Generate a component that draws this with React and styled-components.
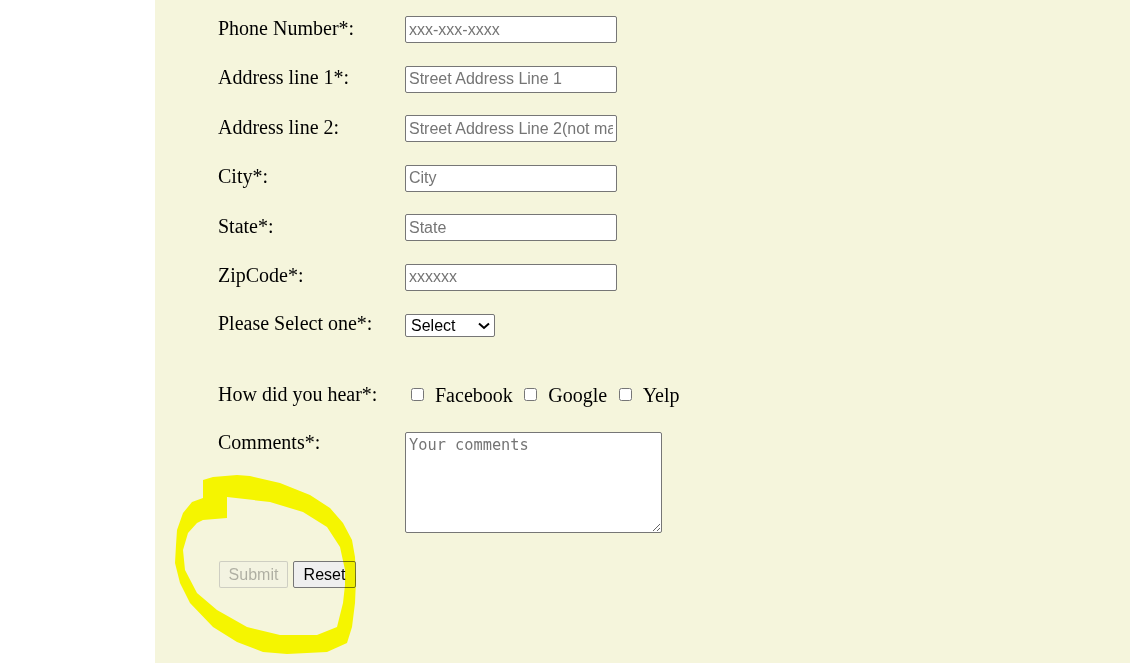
import React from 'react';
import styled, { createGlobalStyle } from 'styled-components';

const GlobalStyle = createGlobalStyle`
  body {
    margin: 0;
    font-family: "Liberation Serif", "Times New Roman", serif;
    font-size: 20px;
    color: #000000;
    background-color: #ffffff;
  }
`;

const fields = [
  { label: 'Phone Number*:', placeholder: 'xxx-xxx-xxxx' },
  { label: 'Address line 1*:', placeholder: 'Street Address Line 1' },
  { label: 'Address line 2:', placeholder: 'Street Address Line 2(not mandatory)' },
  { label: 'City*:', placeholder: 'City' },
  { label: 'State*:', placeholder: 'State' },
  { label: 'ZipCode*:', placeholder: 'xxxxxx' },
];

const sources = ['Facebook', 'Google', 'Yelp'];

const App = () => {
  return (
    <Page>
      <GlobalStyle />
      <Gutter />
      <Main>
        <Form onSubmit={(e) => e.preventDefault()}>
          {fields.map((field, i) => (
            <Row key={field.label} $gap={i === 0 ? 0 : 22.6} $height={27}>
              <Label>{field.label}</Label>
              <TextInput type="text" placeholder={field.placeholder} />
            </Row>
          ))}
          <Row $gap={22.6} $height={23}>
            <Label>Please Select one*:</Label>
            <SelectWrap>
              <Select defaultValue="">
                <option value="">Select</option>
                <option value="home">Home</option>
                <option value="office">Office</option>
              </Select>
              <Chevron width="12" height="8" viewBox="0 0 12 8">
                <polyline
                  points="1,1.5 6,6 11,1.5"
                  fill="none"
                  stroke="#000000"
                  strokeWidth="2"
                />
              </Chevron>
            </SelectWrap>
          </Row>
          <Row $gap={44.5} $height={27}>
            <Label $lift={0}>How did you hear*:</Label>
            <Options>
              {sources.map((src) => (
                <Option key={src}>
                  <Checkbox type="checkbox" />
                  <OptionText>{src}</OptionText>
                </Option>
              ))}
            </Options>
          </Row>
          <Row $gap={23.5} $align="flex-start">
            <Label $top={-1} $lift={0}>
              Comments*:
            </Label>
            <Comments placeholder="Your comments" />
          </Row>
          <Buttons>
            <Button type="submit" disabled $width={69}>
              Submit
            </Button>
            <Button type="reset" $width={63}>
              Reset
            </Button>
          </Buttons>
        </Form>
      </Main>
      <Scribble width="1130" height="663" viewBox="0 0 1130 663">
        <path
          fillRule="evenodd"
          fill="#ffff00"
          d="M203,480 L213,477 L237,475 L250,476 L280,483 L310,495 L330,508 L343,523 L352,540 L355,557 L356,580 L355,603 L352,627 L347,643 L327,652 L287,654 L263,652 L237,642 L213,627 L190,603 L180,583 L175,563 L176,545 L177,530 L183,513 L192,502 L203,498 Z
             M227,497 L227,518 L203,520 L197,523 L188,533 L183,550 L185,570 L197,593 L217,610 L247,627 L280,635 L317,635 L337,627 L343,603 L345,585 L345,570 L340,547 L327,527 L303,512 L270,502 Z"
        />
      </Scribble>
    </Page>
  );
};

export default App;

const Page = styled.div`
  position: relative;
  display: flex;
  min-height: 100vh;
`;

const Gutter = styled.div`
  width: 155px;
  flex-shrink: 0;
  background-color: #ffffff;
`;

const Main = styled.main`
  flex: 1;
  background-color: #f5f5dc;
`;

const Form = styled.form`
  display: flex;
  flex-direction: column;
  padding: 16px 0 0 63px;
`;

const Row = styled.div`
  display: flex;
  align-items: ${(props) => props.$align || 'center'};
  margin-top: ${(props) => props.$gap}px;
  height: ${(props) => (props.$height ? `${props.$height}px` : 'auto')};
`;

const Label = styled.label`
  width: 187px;
  flex-shrink: 0;
  line-height: normal;
  white-space: nowrap;
  margin-top: ${(props) => props.$top || 0}px;
  margin-bottom: ${(props) => (props.$lift === undefined ? 3 : props.$lift)}px;
`;

const TextInput = styled.input`
  box-sizing: border-box;
  width: 212px;
  height: 27px;
  padding: 0 3px;
  border: 1px solid #767676;
  border-radius: 2px;
  background-color: #ffffff;
  font-family: "Liberation Sans", Arial, sans-serif;
  font-size: 16px;
  color: #000000;

  &::placeholder {
    color: #757575;
  }
`;

const SelectWrap = styled.span`
  position: relative;
  display: inline-flex;
`;

const Select = styled.select`
  box-sizing: border-box;
  width: 90px;
  height: 23px;
  padding: 0 0 0 5px;
  border: 1px solid #767676;
  border-radius: 2px;
  background-color: #ffffff;
  appearance: none;
  font-family: "Liberation Sans", Arial, sans-serif;
  font-size: 16px;
  color: #000000;
`;

const Chevron = styled.svg`
  position: absolute;
  right: 5px;
  top: 8px;
  pointer-events: none;
`;

const Options = styled.div`
  display: flex;
  align-items: center;
  gap: 11.5px;
  padding-left: 6px;
`;

const Option = styled.span`
  display: inline-flex;
  align-items: center;
`;

const Checkbox = styled.input`
  width: 13px;
  height: 13px;
  margin: 0 11px 0 0;
`;

const OptionText = styled.span`
  line-height: normal;
  margin-top: 2px;
`;

const Comments = styled.textarea`
  box-sizing: border-box;
  width: 257px;
  height: 101px;
  padding: 3px;
  border: 1px solid #767676;
  border-radius: 2px;
  background-color: #ffffff;
  font-family: "DejaVu Sans Mono", monospace;
  font-size: 15.3px;

  &::placeholder {
    color: #757575;
  }
`;

const Buttons = styled.div`
  display: flex;
  gap: 5px;
  margin-top: 28.5px;
  padding-left: 1px;
`;

const Button = styled.button`
  box-sizing: border-box;
  width: ${(props) => props.$width}px;
  height: 27px;
  padding: 0;
  border: 1px solid #767676;
  border-radius: 2px;
  background-color: #efefef;
  font-family: "Liberation Sans", Arial, sans-serif;
  font-size: 16px;
  color: #000000;

  &:disabled {
    border-color: rgba(118, 118, 118, 0.3);
    background-color: rgba(239, 239, 239, 0.3);
    color: rgba(16, 16, 16, 0.3);
  }
`;

const Scribble = styled.svg`
  position: absolute;
  left: 0;
  top: 0;
  pointer-events: none;
  mix-blend-mode: multiply;
`;
